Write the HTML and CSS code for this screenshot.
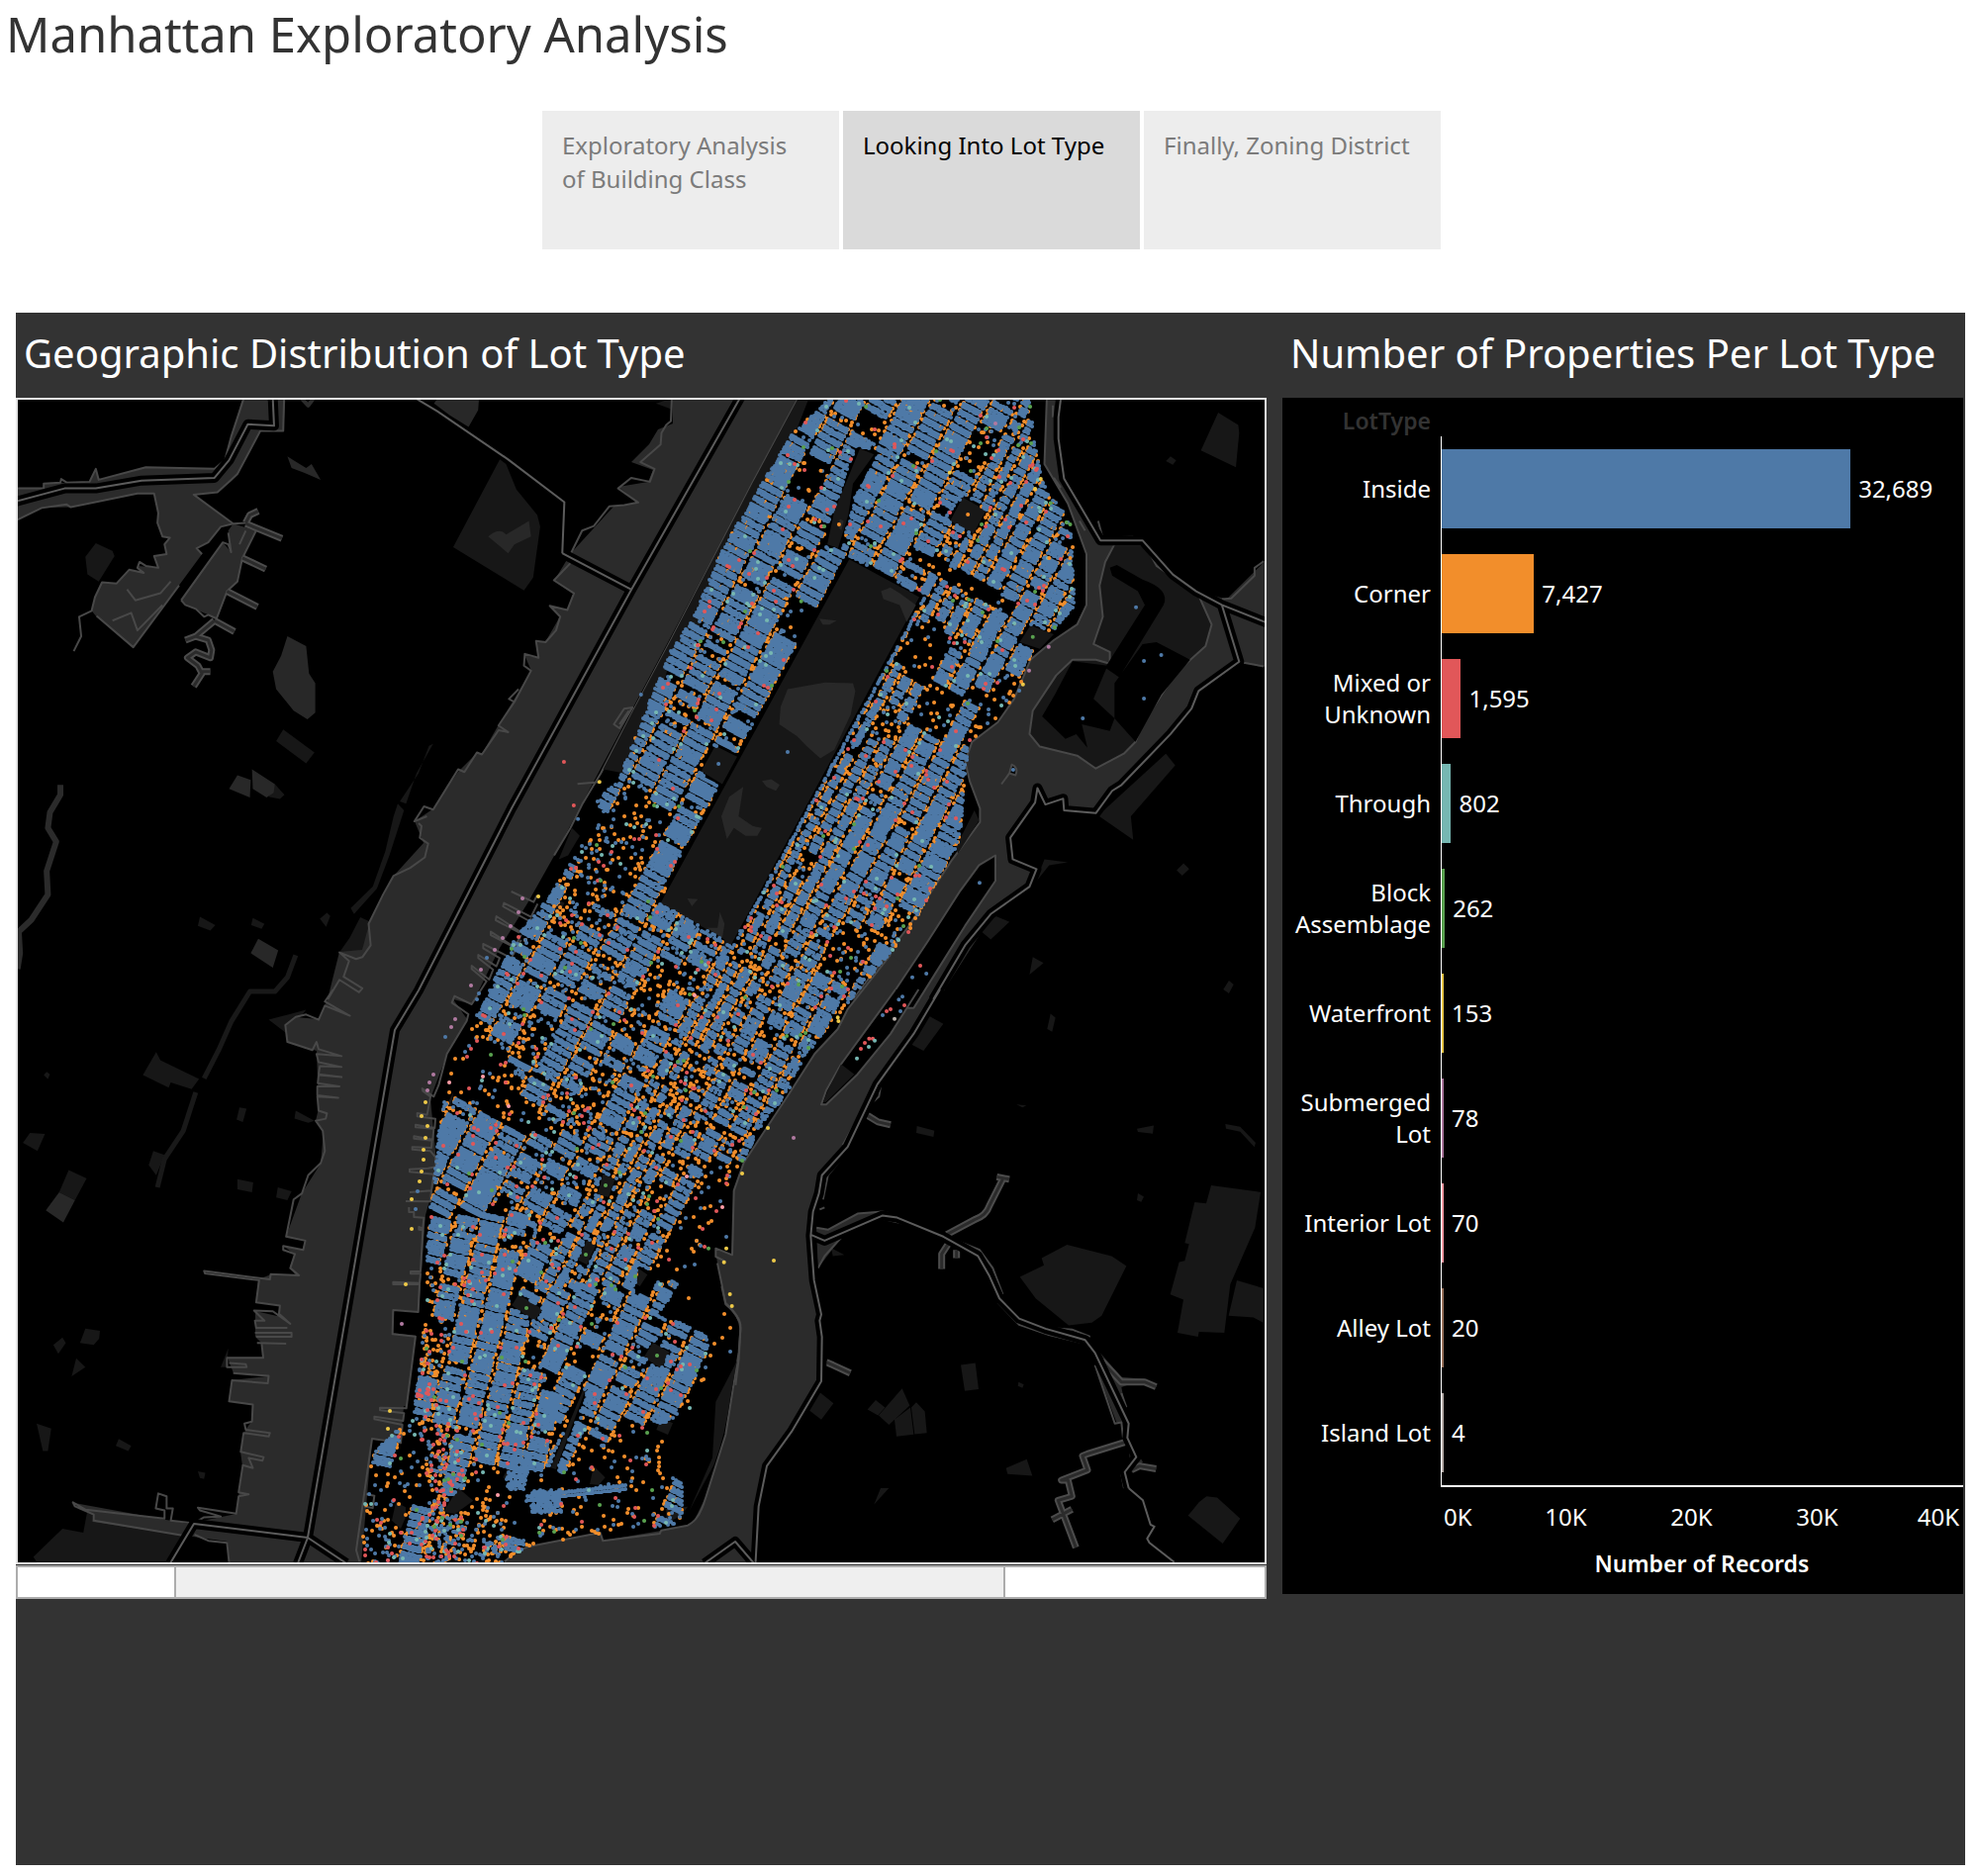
FILE: index.html
```html
<!DOCTYPE html>
<html lang="en">
<head>
<meta charset="utf-8">
<title>Manhattan Exploratory Analysis</title>
<link rel="stylesheet" href="styles.css">
</head>
<body>
<h1 class="page-title">Manhattan Exploratory Analysis</h1>
<nav class="story-nav">
  <button class="story-tab" type="button">Exploratory Analysis of Building Class</button>
  <button class="story-tab story-tab-active" type="button" aria-current="step">Looking Into Lot Type</button>
  <button class="story-tab" type="button">Finally, Zoning District</button>
</nav>
<main class="dashboard">
  <section class="panel">
    <h2 class="panel-title">Geographic Distribution of Lot Type</h2>
    <svg class="map" viewBox="18 404 1260 1175" role="img" aria-label="Map of Manhattan lots coloured by lot type">
      <!-- parks on the mainland and in Queens and Brooklyn -->
      <g class="park">
        <g transform="translate(0 390) scale(.42092 .39541)">
          <path d="M205 437L230 402 270 422 275 435 237 500 210 482ZM1088 412L1200 188 1215 200 1240 265 1290 330 1297 360 1280 490 1258 523ZM680 878L755 937 735 965 663 908ZM480 1357L517 1378 505 1392 475 1380ZM1040 915L1000 990 975 1068 960 1062 1005 990 1030 920ZM955 1068L970 1085 935 1200 905 1285 850 1350 842 1335 895 1280 925 1190 945 1100ZM865 1358L900 1375 900 1430 870 1470 815 1448 840 1410ZM768 1362L785 1347 793 1355 783 1383ZM607 1360L635 1375 628 1388 603 1378ZM660 1018L683 1045 672 1056 645 1050Z"/>
          <path class="lighter" d="M690 640L735 665 742 735 757 760 757 835 738 852 705 830 663 775 655 730 675 690ZM570 995L602 1007 600 1052 550 1030ZM605 980L660 1018 657 1040 640 1052 607 1030ZM620 1413L668 1443 655 1487 602 1450ZM690 180L705 190 735 210 748 200 770 240 730 222 700 210ZM1042 45L1050 33 1150 33 1148 62 1125 105 1080 75ZM1172 385Q1200 360 1215 380L1270 345 1275 385 1235 405 1220 428 1200 410Z"/>
        </g>
        <g transform="translate(0 1000) scale(.42092 .40816)">
          <path d="M375 155L385 175 478 222 460 247 410 230 405 243 343 212ZM165 447L208 468 180 522 142 502ZM72 355L108 358 90 400 55 380ZM575 292L592 295 583 328 568 322ZM570 470L608 478 605 502 570 495ZM667 490L700 500 690 522 663 515ZM205 840L240 845 238 865 225 880 192 875ZM128 880L150 862 158 875 140 902ZM183 913L205 935 172 958ZM88 1075L123 1087 115 1143 103 1143ZM285 1113L315 1130 308 1143 278 1130ZM645 75L700 60 735 50 690 110ZM368 400L395 410 375 460 357 435ZM710 300L755 325 740 330 707 320ZM105 212L112 204 120 210 115 222ZM475 1193L493 1197 490 1212 480 1210ZM548 888L530 935 545 935ZM80 1405L150 1335 200 1345 210 1290 445 1353 405 1420 90 1420Z"/>
          <path class="lighter" d="M142 502L180 522 152 577 110 547Z"/>
        </g>
        <g transform="translate(560 390) scale(.47194 .39541)">
          <path d="M1422 68L1465 100 1467 120 1460 208 1385 165ZM1310 940L1330 970 1235 1100 1240 1160 1165 1098ZM1320 180L1332 190 1325 202 1310 192ZM1348 1220L1360 1235 1345 1252 1333 1238ZM1025 1460L1048 1475 1018 1505ZM945 1355L975 1370 935 1415 910 1390ZM1445 1520L1455 1530 1445 1553 1433 1543ZM218 45L250 33 252 60ZM1050 1210L1100 1218 1060 1225 1030 1270Z"/>
        </g>
        <g transform="translate(800 1000) scale(.33333 .40816)">
          <path d="M835 632L970 660 1015 685 940 808 910 825 840 832 740 765 692 712 765 683 758 665ZM1272 485L1422 502 1405 590 1330 730 1312 850 1235 848 1232 860 1170 850 1188 768 1148 755 1175 675 1192 672 1205 630 1192 628 1222 527 1257 530ZM1350 720L1430 740 1430 825 1400 812 1325 808ZM513 930L557 925 567 990 525 994ZM335 988L358 1030 295 1078 264 1055ZM360 1035L370 1102 318 1107 312 1065ZM378 1022L404 1045 410 1098 373 1101 363 1035ZM255 1017L283 1035 262 1055 230 1040ZM650 1185L713 1163 730 1204 655 1200ZM1258 1255L1290 1258 1360 1310 1307 1372 1202 1303 1235 1270ZM415 65L460 85 400 152 360 135ZM85 997L127 1025 90 1065 50 1040ZM380 338L433 350 430 365 378 355ZM1315 333L1360 340 1407 380 1403 390 1360 352 1317 345ZM1047 345L1098 337 1095 357 1050 353ZM1050 505L1068 513 1060 526 1047 522ZM785 60L800 70 790 105 775 98ZM682 285L712 287 700 292ZM270 1235L295 1235 250 1275ZM120 640L160 657 125 660ZM688 972L704 978 700 987 686 982Z"/>
        </g>
      </g>

      <!-- Hudson, East River, Harlem River and the creeks -->
      <g class="water">
        <path transform="translate(0 390) scale(.42092 .39541)" d="M40 262L105 262 105 250 215 245 230 212 237 240 350 208 515 212 540 190 585 20 686 20 680 115 625 115 570 225 522 272 465 278 560 352 530 360 500 400 472 415 485 430 320 668 230 588 220 575 228 540 245 502 280 505 310 470 345 478 330 460 380 465 370 435 400 430 395 405 408 388 390 385 378 350 380 325 370 275 330 275 170 310 100 312 40 343ZM435 548L535 400 555 425 548 370 560 352 615 370 582 440 570 500 545 525 520 595 500 585 455 565Z"/>
        <path d="M679 402L680 428 665 434 656 449 638 467 660 475 655 487 625 492 645 508 620 512 577 559 560 587 580 600 573 617 556 612 566 623 551 649 542 648 544 665 530 662 537 678 503 734 487 762 482 761 463 780 437 818 419 830 428 852 398 885 373 934 366 960 343 962 331 1010 322 1030 299 1028 288 1036 290 1053 320 1062 322 1120 319 1133 327 1143 324 1176 305 1206 289 1250 308 1254 306 1263 286 1259 298 1268 293 1280 298 1288 274 1288 261 1293 259 1316 283 1320 280 1330 258 1325 258 1351 264 1357 266 1372 230 1372 236 1388 270 1391 234 1395 231 1416 255 1420 254 1437 248 1445 243 1467 245 1482 239 1530 219 1534 190 1540 75 1519 95 1532 93 1538 188 1552 230 1558 232 1580 365 1580 376 1454 405 1458 408 1421 411 1422 420 1350 396 1347 398 1324 423 1326 430 1228 442 1185 435 1110 452 1065 472 1030 458 1010 477 1015 505 958 533 913 560 865 806 403Z"/>
        <path transform="translate(560 390) scale(.47194 .39541)" d="M1055 33L1050 200 1100 300 1140 430 1140 560 1120 610 1070 650 1020 700 985 800 950 860 895 910 880 960 890 1010 912 1080 912 1115 850 1215 760 1380 630 1590 810 1590 940 1350 1020 1280 1035 1235 980 1210 975 1155 1035 1060 1035 1025 1052 1070 1090 1055 1092 1085 1160 1092 1195 1035 1320 890 1380 780 1465 705 1525 718 1525 445 1440 545 1375 525 1260 405 1170 395 1090 235 1080 80 1085 33Z"/>
        <path d="M900 965L857 1020 847 1040 823 1065 797 1107 752 1175 742 1203 740 1268 723 1262 725 1277 733 1317 748 1337 748 1367 733 1450 713 1513 700 1540 668 1547 609 1557 607 1549 533 1563 505 1582 763 1582 763 1545 775 1480 830 1397 830 1330 823 1294 820 1249 831 1188 857 1159 887 1096 955 1000Z"/>
        <path transform="translate(800 1000) scale(.33333 .40816)" d="M75 590L110 595 200 555 275 550 100 622 150 615 80 690ZM925 890L1000 960 1070 965 1000 985 1015 1050ZM920 930L985 1072 1015 1075ZM1018 1110L1065 1170 1030 1195Z"/>
      </g>

      <!-- islands -->
      <g class="land">
        <g transform="translate(560 390) scale(.47194 .39541)">
          <path class="park shore" d="M1200 405L1265 405 1290 460 1380 535 1408 610 1395 665 1330 735 1290 810 1260 860 1245 910 1220 940 1160 978 1120 945 1040 922 1018 890 1025 830 1075 740 1110 700 1160 700 1190 710 1190 680 1155 660 1175 590 1168 510 1180 450Z"/>
          <path d="M1072 790L1110 704 1185 715 1155 800 1200 850 1190 882 1130 865 1142 925 1118 890 1095 902 1045 845ZM1200 760L1260 660 1290 655 1362 700 1300 790 1245 910 1200 850ZM1190 465L1205 458 1260 495Q1320 520 1305 560L1210 745 1180 720 1265 560 1250 525 1195 485Z"/>
          <path class="shore" d="M945 1200L945 1265 880 1380 770 1590 705 1590 800 1420 870 1290 910 1225ZM980 968Q995 975 988 995L975 990ZM958 1018L975 990"/>
        </g>
        <g transform="translate(800 1000) scale(.33333 .40816)">
          <path class="shore" d="M315 0L150 185 105 250 90 285 105 285 200 210 300 110 385 0"/>
          <path class="park" d="M150 185L190 210 105 278 95 280 110 250Z"/>
        </g>
      </g>

      <!-- shorelines -->
      <g class="shore">
        <path transform="translate(560 390) scale(.47194 .39541)" d="M252 33L250 90 240 100 230 120 228 150 185 195 215 212 205 245 165 235 137 262 180 298 150 305 118 308 85 358 60 370 36 428M522 33L425 248 250 650 165 840 100 990 60 1070 35 1130 0 1200M50 1017L98 1012M128 865L150 825 168 822 140 875ZM140 865L160 830M1055 33L1050 200 1100 300 1140 430 1140 560 1120 610 1070 650 1020 700 985 800 950 860 895 910 880 960 890 1010 912 1080 912 1115 850 1215 760 1380 640 1568M1430 545L1450 543 1500 485 1500 465 1520 448M1465 705L1520 717M1068 50L1068 80M1070 235L1085 260M1125 345L1137 370M1165 345L1175 390 1240 385"/>
        <path transform="translate(0 390) scale(.42092 .39541)" d="M40 262L105 262 105 250 145 247 147 238 160 247 215 245 230 212 237 240 350 208 515 212 540 190 555 130 585 33M682 33L680 115 625 115 570 225 555 240 522 272 465 278 560 352 590 350M40 343L100 312 160 303 170 310 330 275 370 275 380 325 378 350 390 385 408 388 395 405 400 430 370 435 380 465 350 460 335 450 330 465 345 478 310 470 280 505 245 502 228 540 220 575 190 590 195 640 177 678M232 588L320 668 430 510M485 430L472 415 500 400 530 360 560 352M435 548L535 400 548 405 555 425 548 375M590 370L575 405M615 370L582 440 570 500 545 525 520 595 500 585 490 590 470 570 445 560 435 548M305 520L325 548 385 530 410 500M270 600L315 580 330 625 390 560M1372 428L1368 455 1330 497 1378 530 1362 573 1320 562 1345 590 1335 625 1310 655 1287 652 1293 695 1260 685 1258 715 1275 728 1235 808 1222 800 1245 775M1235 808L1197 868 1220 885 1197 880 1157 942 1145 937 1115 987 1100 980 1040 1083 1018 1075 995 1113 1025 1100M1005 1118L1012 1125 1008 1155 1028 1170 1020 1205 985 1232 945 1252 920 1300 885 1375 890 1430 870 1460 855 1465 815 1448 838 1470 825 1510 870 1540 862 1550 815 1518 787 1568"/>
        <path transform="translate(0 1000) scale(.42092 .40816)" d="M800 0L780 30 840 65 780 40 765 75 735 62 710 68 685 88 690 130 750 150 760 130 765 148 820 165 760 160 765 180 820 192 768 190 765 210 820 217 765 212 763 232 815 240 762 240 762 262 812 268 762 265 765 300 785 307 782 320 758 325 775 350 780 400 770 430 740 460 725 505 705 520 687 612 733 622 728 645 680 635 680 645 708 655 697 690 718 708 650 705 648 718 490 697 492 703 622 720 615 775 672 783 670 803 697 828 655 797 610 795 635 820 612 820 615 838 690 838M612 850L700 850 700 860 615 860M617 875L687 877M628 875L632 912 545 912 545 935 592 935 590 928 550 925M560 950L645 957 643 975 557 968 550 1020 607 1028 605 1070 587 1075 590 1090 648 1098 645 1107 585 1098 578 1145 633 1158 630 1167 597 1160 607 1185 583 1178 573 1245 597 1250 573 1255 567 1298 475 1283 480 1290 530 1305 490 1307 465 1322 410 1315 415 1285 400 1285 400 1255 380 1248 374 1285 395 1290 395 1310 205 1288 175 1270 180 1280 225 1300 225 1315 445 1353M467 1350L500 1365 545 1370 550 1418"/>
        <path transform="translate(400 900) scale(.33333)" d="M428 15L418 35 350 3M430 40L410 80 328 38 325 48 400 90M410 85L385 130 305 78 303 90 375 128M380 135L360 172 288 125 288 135 355 170M380 150L350 205 265 162 265 175 315 205 305 230 250 195 250 205 295 240 283 270 230 228 230 238 275 275 230 345 178 320 170 340 220 375 215 395 155 495 130 590 115 625 80 600 82 608 105 625 95 680 65 675 65 685 120 692 118 720 60 710 60 718 115 722 112 755 55 745 55 752 110 758 108 780 50 778 50 785 105 790 120 808 122 838 98 842 42 845 42 853 115 860 108 910 42 915M30 942L105 943 108 910M40 960L40 975 55 975 55 990 85 992 82 1025 70 1020 70 1028 82 1030 75 1155 45 1155 45 1162 75 1162 72 1190 -8 1187 -8 1194 72 1194 68 1278 -8 1272 -10 1345 60 1352M1500 195L1370 360 1340 420 1270 495 1190 620 1055 825 1025 910 1020 1105 970 1085 970 1110 1000 1125M975 1130L1000 1250Q1045 1290 1045 1330L1040 1420 1030 1500"/>
        <path transform="translate(360 1300) scale(.33333)" d="M180 150L152 370 72 368 72 376 145 385 142 408 55 395 55 403 140 420 135 475 48 462 0 800 10 835M30 630L55 635 50 672 25 668M1108 0L1120 55Q1170 95 1165 130L1160 200 1120 450 1060 640Q1040 710 1005 725L925 740 920 750 748 772 740 747 520 790Q480 805 450 835"/>
        <path transform="translate(800 1000) scale(.33333 .40816)" d="M75 590L110 595 200 555 275 550 340 562M150 615L100 660 80 690M275 568L340 580 440 610M510 625L570 645 610 690 640 755M625 775L690 830 780 855 880 875M780 838L850 842 905 860M920 930L980 1075 1000 1072 1005 1110M1000 1000L1015 1035M200 320L155 385M170 400L110 460 95 520M100 540L85 545M1000 1200L1008 1235M270 240L265 265 245 280"/>
      </g>

      <!-- narrow creeks: casing below, water above -->
      <g class="creek-casing">
        <path id="creeks-west" transform="translate(0 390) scale(.42092 .39541)" d="M590 350L600 330 620 320M590 352L677 390M582 440L638 468M545 525L618 565M515 600L563 628M515 600L470 640 445 650M470 640L500 650 508 675 505 695 470 680 450 695 475 715 485 735 465 768M485 730L505 730"/>
        <path id="creeks-east" transform="translate(800 1000) scale(.33333 .40816)" d="M470 607L555 570Q590 560 600 535L640 470M622 464L660 470M475 630L455 655 455 692M500 645L500 665M940 920L1000 972 1070 972 1105 984M1015 1120L897 1150 882 1155 897 1190 818 1215 838 1215 850 1255 808 1265 862 1382M790 1313L850 1287M1030 1190L1055 1180 1105 1187M105 923L125 930 178 950M230 312L262 328 300 335"/>
      </g>
      <g class="creek-water">
        <use href="#creeks-west"/>
        <use href="#creeks-east"/>
      </g>
      <path class="stream" transform="translate(0 390) scale(.42092 .39541)" d="M145 1020L145 1045 120 1090 115 1130 135 1165 112 1240 115 1300 75 1365 45 1395 48 1450 42 1490"/>
      <path class="stream stream-small" transform="translate(0 390) scale(.42092 .39541)" d="M725 33L740 50 752 33"/>
      <path class="trail" transform="translate(0 1000) scale(.42092 .40816)" d="M710 -85L690 -30 660 5 600 5 555 80 525 150 490 220M470 255L440 350 395 420 378 490"/>

      <!-- Manhattan parks -->
      <g class="park">
        <g transform="translate(560 390) scale(.47194 .39541)">
          <path d="M522 33L545 33 520 110 430 330 360 500 300 640 250 690 235 760 150 990 105 980 165 840 250 650 425 248ZM632 443L782 540 370 1448 358 1445 365 1415 228 1322ZM655 160L685 175 640 250 630 330 608 415 585 405 600 320ZM875 285L925 318 898 378 848 345ZM345 920L392 948 360 1018 315 985ZM1020 612L1070 635 1040 672 997 655ZM780 33L795 33 760 100 748 95ZM900 1085L910 1110 865 1195 860 1180ZM38 1130L55 1150 30 1200 10 1210Z"/>
          <path class="lighter" d="M485 820L500 775 580 758 640 760 645 780 635 840 600 930 570 952 540 920 520 895 482 865ZM700 525L720 515 740 530 775 560 755 603 740 560 705 545ZM375 1050L405 1025 395 1100 425 1125 445 1130 435 1150 410 1150 385 1130 370 1158 358 1100ZM445 1010L465 1005 483 1020 475 1035 455 1025ZM568 595L605 600 590 610 575 610ZM355 1345L365 1375 360 1412 328 1385 350 1385ZM285 1310L308 1312 295 1330ZM612 340L620 345 615 370 608 360Z"/>
        </g>
        <path transform="translate(400 900) scale(.33333)" d="M628 860L665 875 645 930 612 920ZM580 1060L608 1072 580 1135 550 1120ZM735 1145L763 1165 740 1200 708 1180ZM372 1225L445 1270 420 1305 352 1258ZM780 1370L830 1400 805 1450 752 1415ZM160 640L175 610 160 700ZM480 20L512 38 490 75 452 55ZM1155 565L1190 578 1180 590 1150 575Z"/>
        <path transform="translate(360 1300) scale(.33333)" d="M690 308L695 315 605 555 590 550ZM310 612L355 650 300 690 262 685ZM120 655L150 670 150 700 135 735 108 710ZM940 675L1005 668Q980 710 940 712ZM1155 225L1135 330Q1120 450 1085 540L1010 680 1080 520 1090 350ZM465 540L480 600 445 580ZM720 545L755 580 735 602 708 600ZM925 400L960 415 945 450 910 435Z"/>
      </g>

      <!-- county boundaries: black casing with a thin grey line -->
      <g class="boundary-casing">
        <g id="boundaries">
          <path d="M748 402L638 596 517 817 423 1001 399 1041 311 1554 301 1580M172 1580L196 1540 311 1554 350 1580"/>
          <path transform="translate(0 390) scale(.42092 .39541)" d="M40 295L155 262 230 262 340 242 515 235 550 190 595 98 658 102 655 33M1350 428L1515 520"/>
          <path transform="translate(560 390) scale(.47194 .39541)" d="M1085 33L1080 80 1080 135 1092 237 1170 395 1260 395 1325 482 1375 525 1430 560 1525 605M1430 560L1467 705 1380 780 1365 825 1320 890 1215 1020 1195 1035 1160 1092 1092 1085 1090 1055 1052 1070 1035 1028 1030 1065 977 1155 982 1210 1033 1235 1018 1280 935 1350 880 1430 812 1568"/>
          <path transform="translate(800 1000) scale(.33333 .40816)" d="M450 0L370 110 260 235 170 390 92 460 83 505 65 550 58 610 68 720 90 805 85 820 92 860 90 970 0 1095 -75 1180 -100 1280 -110 1430M60 608L100 622 275 560 320 565 460 612 565 660 600 710 630 765 690 815 770 840 890 868 920 900 1022 1075 1018 1110 1045 1158 1010 1195 1022 1235"/>
          <path d="M712 1580L743 1558 762 1580"/>
        </g>
      </g>
      <g class="boundary">
        <use href="#boundaries"/>
        <path transform="translate(0 390) scale(.42092 .39541)" d="M1000 33L1050 65 1220 188 1355 297 1350 428"/>
        <path transform="translate(800 1000) scale(.33333 .40816)" d="M1022 1235L1065 1265 1088 1325 1100 1330 1078 1360 1085 1370 1160 1418"/>
      </g>

      <g class="lots" id="lots"></g>

      <!-- single lots on the piers, the islands and in the parks -->
      <g class="lots">
        <g transform="translate(400 900) scale(.33333)">
          <path class="lot-waterfront" d="M90 642h.1M78 684h.1M96 714h.1M90 750h.1M84 786h.1M84 816h.1M78 852h.1M72 882h.1M48 936h.1M48 1026h.1M30 1194h.1M1128 720h.1M1050 858h.1M1002 1085h.1M995 1127h.1M1146 1122h.1M1013 1224h.1M1019 1260h.1M432 18h.1M1340 385h.1M1342 396h.1M-18 1578h.1M-24 1632h.1"/>
          <path class="lot-submerged" d="M384 24h.1M372 66h.1M348 108h.1M324 144h.1M300 180h.1M258 240h.1M228 288h.1M180 390h.1M168 414h.1M114 558h.1M102 582h.1M96 606h.1M18 1314h.1M1206 750h.1"/>
          <path class="lot-block" d="M636 894h.1M576 1104h.1M726 1170h.1M396 1266h.1M792 1410h.1M696 1446h.1M948 1085h.1"/>
          <path class="lot-inside" d="M276 204h.1M252 312h.1M246 330h.1M282 384h.1M150 444h.1M66 912h.1M60 966h.1M906 1134h.1M1002 1050h.1M1014 1398h.1M1434 234h.1"/>
          <path class="lot-corner" d="M480 48h.1M246 444h.1M180 510h.1M888 1236h.1M996 1284h.1M1014 1326h.1M990 1356h.1M966 1374h.1M948 1008h.1M912 1062h.1"/>
          <path class="lot-mixed" d="M228 480h.1M216 504h.1M318 528h.1M936 1080h.1M972 972h.1M1002 888h.1"/>
          <path class="lot-interior" d="M990 960h.1M342 654h.1M264 564h.1M906 318h.1"/>
        </g>
        <g transform="translate(560 390) scale(.47194 .39541)">
          <path class="lot-inside" d="M449 258h.1M250 678h.1M186 789h.1M500 936h.1M1246 566h.1M1263 703h.1M1300 688h.1M1263 799h.1M1132 850h.1M983 981h.1M911 1270h.1M352 966h.1M93 1062h.1M51 1107h.1M797 1502h.1M767 1512h.1"/>
          <path class="lot-mixed" d="M21 961h.1M42 1072h.1M784 1482h.1M1025 202h.1M1034 212h.1"/>
          <path class="lot-waterfront" d="M97 1012h.1M1004 763h.1M1042 238h.1M1030 263h.1M847 222h.1"/>
          <path class="lot-submerged" d="M1059 667h.1M1017 728h.1M945 96h.1"/>
          <path class="lot-corner" d="M886 329h.1M610 354h.1M534 197h.1M571 217h.1M546 268h.1M1105 440h.1M1060 440h.1"/>
          <path class="lot-block" d="M1025 642h.1M1072 617h.1M1097 349h.1M1105 354h.1M534 157h.1M529 551h.1M1063 300h.1"/>
        </g>
        <g transform="translate(800 1000) scale(.33333 .40816)">
          <path class="lot-mixed" d="M288 54h.1M300 49h.1M210 147h.1M222 132h.1M235 122h.1M246 122h.1M342 39h.1"/>
          <path class="lot-through" d="M198 171h.1M234 142h.1M252 127h.1"/>
          <path class="lot-inside" d="M276 64h.1M325 25h.1M330 54h.1M336 18h.1"/>
          <path class="lot-alley" d="M312 73h.1"/>
        </g>
      </g>
    </svg>
    <input class="scrubber" type="range" min="0" max="1000" value="375" aria-label="Scroll the map">
  </section>

  <section class="panel">
    <h2 class="panel-title">Number of Properties Per Lot Type</h2>
    <div class="chart">
      <div class="chart-head">LotType</div>
      <div class="row"><div class="label">Inside</div><div class="plot"><div class="bar inside" style="width:78.4%"></div><div class="value">32,689</div></div></div>
      <div class="row"><div class="label">Corner</div><div class="plot"><div class="bar corner" style="width:17.7%"></div><div class="value">7,427</div></div></div>
      <div class="row"><div class="label">Mixed or Unknown</div><div class="plot"><div class="bar mixed" style="width:3.7%"></div><div class="value">1,595</div></div></div>
      <div class="row"><div class="label">Through</div><div class="plot"><div class="bar through" style="width:1.8%"></div><div class="value">802</div></div></div>
      <div class="row"><div class="label">Block Assemblage</div><div class="plot"><div class="bar block" style="width:0.6%"></div><div class="value">262</div></div></div>
      <div class="row"><div class="label">Waterfront</div><div class="plot"><div class="bar waterfront" style="width:0.4%"></div><div class="value">153</div></div></div>
      <div class="row"><div class="label">Submerged Lot</div><div class="plot"><div class="bar submerged" style="width:0.2%"></div><div class="value">78</div></div></div>
      <div class="row"><div class="label">Interior Lot</div><div class="plot"><div class="bar interior" style="width:0.2%"></div><div class="value">70</div></div></div>
      <div class="row"><div class="label">Alley Lot</div><div class="plot"><div class="bar alley" style="width:0.1%"></div><div class="value">20</div></div></div>
      <div class="row"><div class="label">Island Lot</div><div class="plot"><div class="bar island" style="width:0.1%"></div><div class="value">4</div></div></div>
      <div class="axis">
        <div class="ticks"><span>0K</span><span>10K</span><span>20K</span><span>30K</span><span>40K</span></div>
        <div class="axis-title">Number of Records</div>
      </div>
    </div>
  </section>
</main>
<script src="lots.js"></script>
</body>
</html>
```

FILE: styles.css
```css
* { box-sizing: border-box; }

body {
  margin: 0;
  min-height: 100vh;
  display: flex;
  flex-direction: column;
  background: #fff;
  color: #333;
  font: 24px/32px "Noto Sans", "Open Sans", sans-serif;
}

.page-title {
  margin: 0;
  padding: 4px 6px 0;
  font-size: 49px;
  line-height: 60px;
  font-weight: 400;
}

.story-nav {
  display: flex;
  justify-content: center;
  gap: 4px;
  padding: 48px 0 64px 4px;
}

.story-tab {
  width: 300px;
  height: 140px;
  padding: 18px 28px 18px 20px;
  display: flex;
  align-items: flex-start;
  border: 0;
  background: #ededed;
  color: #7b7b7b;
  font: inherit;
  line-height: 34px;
  text-align: left;
}

.story-tab-active { background: #dadada; color: #000; }

.dashboard {
  flex: 1;
  display: grid;
  grid-template-columns: minmax(0, 1264fr) minmax(0, 688fr);
  align-items: start;
  gap: 16px;
  margin: 0 14px 11px 16px;
  padding-right: 2px;
  background: #333;
}

.panel { display: flex; flex-direction: column; }

.panel-title {
  margin: 0;
  padding: 14px 8px 18px;
  color: #fff;
  font-size: 40px;
  line-height: 54px;
  font-weight: 400;
  white-space: nowrap;
}

/* map */
.map {
  display: block;
  width: 100%;
  height: auto;
  border: 2px solid #e4e4e4;
  background: #000;
}

.map path { vector-effect: non-scaling-stroke; }
.park { fill: #171717; }
.lighter { fill: #282828; }
.water { fill: #2b2b2b; }
.land { fill: #000; }
.shore { fill: none; stroke: #484848; stroke-width: 2; stroke-linejoin: round; }
.land .shore { fill: #000; }
.land .park { fill: #171717; }
.creek-casing, .creek-water, .boundary, .boundary-casing, .stream, .trail { fill: none; stroke-linejoin: round; }
.creek-casing { stroke: #4c4c4c; stroke-width: 7; }
.creek-water { stroke: #2b2b2b; stroke-width: 3; }
.stream { stroke: #2b2b2b; stroke-width: 6; }
.stream-small { stroke-width: 4; }
.trail { stroke: #191919; stroke-width: 5; }
.boundary-casing { stroke: #000; stroke-width: 10; }
.boundary { stroke: #5c5c5c; stroke-width: 2; }

.lots { fill: none; stroke-width: 4; stroke-linecap: round; }
.lot-inside { stroke: #4e79a7; }
.lot-corner { stroke: #f28e2b; }
.lot-mixed { stroke: #e15759; }
.lot-through { stroke: #76b7b2; }
.lot-block { stroke: #59a14f; }
.lot-waterfront { stroke: #edc948; }
.lot-submerged { stroke: #b07aa1; }
.lot-interior { stroke: #ff9da7; }
.lot-alley { stroke: #bab0ac; }

/* scroll strip under the map */
.scrubber {
  appearance: none;
  width: 100%;
  height: 34px;
  margin: 1px 0 0;
  border: 2px solid #acacac;
  background: #fff;
}

.scrubber::-webkit-slider-thumb {
  appearance: none;
  width: 840px;
  height: 30px;
  border: solid #acacac;
  border-width: 0 2px;
  background: #efefef;
}

/* chart */
.chart { background: #000; color: #fff; padding-bottom: 6px; }

.chart-head {
  width: 150px;
  height: 39px;
  padding-top: 7px;
  color: #333;
  font-size: 23px;
  font-weight: 600;
  text-align: right;
}

.row { display: grid; grid-template-columns: 160px 1fr; height: 106px; }

.label {
  align-self: center;
  padding: 0 10px 0 12px;
  text-align: right;
}

.plot {
  display: flex;
  align-items: center;
  gap: 8px;
  border-left: 1px solid #fff;
}

.bar { height: 80px; min-width: 2px; }
.inside { background: #4e79a7; }
.corner { background: #f28e2b; }
.mixed { background: #e15759; }
.through { background: #76b7b2; }
.block { background: #59a14f; }
.waterfront { background: #edc948; }
.submerged { background: #b07aa1; }
.interior { background: #ff9da7; }
.alley { background: #9c755f; }
.island { background: #bab0ac; }

.axis { margin-left: 160px; border-top: 2px solid #fff; }

.ticks {
  display: grid;
  grid-template-columns: 60fr 127fr 127fr 127fr 80fr;
  padding: 14px 4px 0 3px;
  text-align: center;
}

.ticks :first-child { text-align: left; }
.ticks :last-child { text-align: right; }
.axis-title { padding: 15px 0 9px; font-size: 23px; font-weight: 600; text-align: center; }
```

FILE: lots.js
```js
// Scatters the tax lots over the street grid of Manhattan, one path per lot type.
(function () {
  var seed = 20117;
  function rnd() {
    seed = (seed * 1103515245 + 12345) % 2147483648;
    return seed / 2147483648;
  }
  function inside(poly, x, y) {
    var hit = false;
    for (var i = 0, j = poly.length - 1; i < poly.length; j = i++) {
      var a = poly[i], b = poly[j];
      if ((a[1] > y) !== (b[1] > y) && x < (b[0] - a[0]) * (y - a[1]) / (b[1] - a[1]) + a[0]) hit = !hit;
    }
    return hit;
  }

  var shore = [[838,403],[1040,403],[1046,450],[1055,490],[1083,530],[1086,612],[1062,640],[1035,672],[1030,700],[1000,732],[978,755],[974,800],[970,850],[950,885],[918,945],[880,985],[848,1025],[815,1065],[795,1105],[768,1140],[752,1172],[735,1200],[705,1265],[665,1330],[712,1345],[720,1370],[702,1420],[668,1440],[672,1480],[690,1500],[690,1540],[610,1550],[540,1560],[505,1580],[362,1580],[375,1470],[418,1430],[430,1330],[433,1240],[445,1130],[455,1080],[490,1010],[520,950],[556,905],[605,828],[606,805],[625,790],[650,725],[675,665],[705,615],[730,555],[760,505],[800,440]];
  var holes = [
    [[856,560],[934,603],[740,955],[665,912]],
    [[866,450],[888,458],[865,500],[850,556],[830,552]],
    [[973,500],[998,516],[984,541],[958,526]],
    [[720,752],[748,765],[728,795],[706,780]],
    [[1040,630],[1068,640],[1050,660],[1028,650]],
    [[608,1185],[624,1192],[616,1212],[602,1207]],
    [[592,1252],[605,1258],[594,1280],[582,1274]],
    [[522,1306],[550,1323],[540,1336],[516,1320]],
    [[660,1355],[678,1366],[668,1384],[650,1372]],
    [[588,1402],[594,1406],[563,1486],[555,1482]],
    [[463,1503],[480,1517],[460,1532],[446,1528]],
    [[645,1280],[668,1290],[655,1312],[640,1306]]
  ];
  // Districts with few lots: centre, half lengths along the avenue and the street, density
  var quiet = [
    [826,480,26,16,.08],[800,620,24,18,.12],[978,585,11,62,.08],[935,655,34,22,.1],[946,715,30,18,.1],
    [1010,715,44,26,.2],[625,855,68,44,.24],[990,450,30,12,.35],[880,425,14,8,.2],[470,1075,40,34,.1],[520,1120,14,42,.12],
    [505,1105,12,30,.15],[645,1015,36,16,.35],[690,985,20,20,.35],[860,960,40,14,.25],[700,1240,60,24,.1],[735,1185,24,12,.2],
    [590,920,36,18,.45],[660,1205,16,12,.35],
    [630,1500,70,50,.12],[700,1440,80,22,.12],[560,1530,40,70,.1],[400,1510,90,28,.12],[440,1360,50,12,.4],[440,1290,50,12,.4],
    [545,1365,22,12,.35],[592,1373,12,14,.06],[470,1560,50,50,.4],[500,1500,20,30,.2],[815,870,16,8,.4],[900,730,24,10,.3],
    [620,1330,36,10,.4],[605,1110,40,18,.45],[700,1085,30,14,.45],[540,1040,24,16,.4]
  ];
  function density(x, y) {
    var d = .92;
    quiet.forEach(function (q) {
      var dx = x - q[0], dy = y - q[1];
      var s = (-.481 * dx + .877 * dy) / q[2], t = (.877 * dx + .481 * dy) / q[3];
      if (s * s + t * t < 1) d = Math.min(d, q[4]);
    });
    return d;
  }

  var paths = { corner: '', inside: '', through: '', mixed: '', block: '', interior: '' };
  function put(x, y, type) {
    if (!inside(shore, x, y)) return;
    for (var i = 0; i < holes.length; i++) if (inside(holes[i], x, y)) return;
    paths[type] += 'M' + Math.round(x) + ' ' + Math.round(y) + 'h.1';
  }
  function pick(mix) {
    var r = rnd(), k;
    for (k in mix) { r -= mix[k]; if (r < 0) return k; }
    return 'inside';
  }
  var homes = { corner: .02, mixed: .008, through: .01, block: .001 };
  var offices = { corner: .4, mixed: .07, through: .05, block: .03, interior: .003 };
  var corners = { corner: .84, mixed: .04, through: .02, block: .01 };

  function grid(angle, ox, oy, avenues, from, to, area) {
    var c = Math.cos(angle), s = Math.sin(angle);
    for (var a = from; a < to; a += 8) {
      for (var k = 0; k < avenues.length - 1; k++) {
        var t0 = avenues[k], t1 = avenues[k + 1], mid = (t0 + t1) / 2;
        var bx = ox + c * mid - s * a, by = oy + s * mid + c * a;
        if (!area(bx, by)) continue;
        var d = density(bx, by), busy = d > .6;
        var midtown = by > 915 && by < 1260 && bx > 500;
        if (busy) d = rnd() < (midtown ? .24 : .09) ? .4 : (midtown ? .92 : 1);
        var wide = d > .6 && rnd() < .3;
        for (var row = 0; row < 3; row++) {
          if (row === 2 && !wide) continue;
          var v = a + 1.2 + row * 3.1;
          for (var t = t0 + 3.8; t < t1 - 3; t += 2.1) {
            if (rnd() > (d > .6 ? d : d * .6)) continue;
            var jt = t + rnd() - .5, jv = v + rnd() * .8;
            if (d <= .6) { jt += rnd() * 3 - 1.5; jv += rnd() * 3 - 1.5; }
            put(ox + c * jt - s * jv, oy + s * jt + c * jv, pick(d > .6 ? homes : offices));
          }
          if (row === 2) continue;
          [t0 + 2.2, t1 - 2.2].forEach(function (e) {
            if (rnd() > (busy ? .66 : d * 1.2)) return;
            var je = e + rnd() * 1.6 - .8;
            put(ox + c * je - s * v, oy + s * je + c * v, pick(corners));
          });
        }
      }
    }
  }

  var uptown = [-230,-202,-174,-146,-115,-85,-57,-28,0,27,53,80,94,107,121,135,154,174,194,214,240,266,290];
  var downtown = [];
  for (var n = -310; n <= 310; n += 25) downtown.push(n);
  function village(x, y) { return y > 1225 && x < 530 || y > 1385 && x < 560; }
  function eastSide(x, y) { return !village(x, y) && y > 1300; }

  grid(.5017, 856, 560, uptown, -240, 1000, function (x, y) { return !village(x, y) && !eastSide(x, y); });
  grid(.24, 480, 1400, downtown, -220, 200, village);
  grid(.46, 600, 1400, downtown, -160, 220, eastSide);

  // Lots that break the regular rows around SoHo and the Village
  for (var m = 0; m < 420; m++) {
    var mx = 440 + rnd() * 130, my = 1230 + rnd() * 250;
    if (density(mx, my) > .6) put(mx, my, pick({ corner: .5, mixed: .09, through: .06, block: .01 }));
  }

  // The old streets at the southern tip have no grid
  [[445,1550,26,30,150],[390,1560,24,26,50],[450,1480,20,45,170],[428,1400,8,60,70],[505,1565,18,12,50],[440,1415,20,14,50]].forEach(function (q) {
    for (var i = 0; i < q[4]; i++) {
      var r = Math.sqrt(rnd()), w = rnd() * 6.283;
      put(q[0] + q[2] * r * Math.cos(w), q[1] + q[3] * r * Math.sin(w),
        pick({ corner: .3, mixed: .18, through: .04, block: .02 }));
    }
  });
  for (var b = 0; b < 34; b++) {
    put(533 + b * 3, 1516 - b / 3, 'inside');
    put(533 + b * 3, 1512 - b / 3, 'inside');
  }
  for (b = 0; b < 170; b++) put(537 + rnd() * 30, 1506 + rnd() * 24, 'inside');
  for (b = 0; b < 150; b++) put(517 + rnd() * 20 - b / 20, 1468 + b / 4, 'inside');

  var layer = document.getElementById('lots');
  Object.keys(paths).forEach(function (type) {
    var p = document.createElementNS('http://www.w3.org/2000/svg', 'path');
    p.setAttribute('class', 'lot-' + type);
    p.setAttribute('d', paths[type]);
    layer.appendChild(p);
  });
})();
```
